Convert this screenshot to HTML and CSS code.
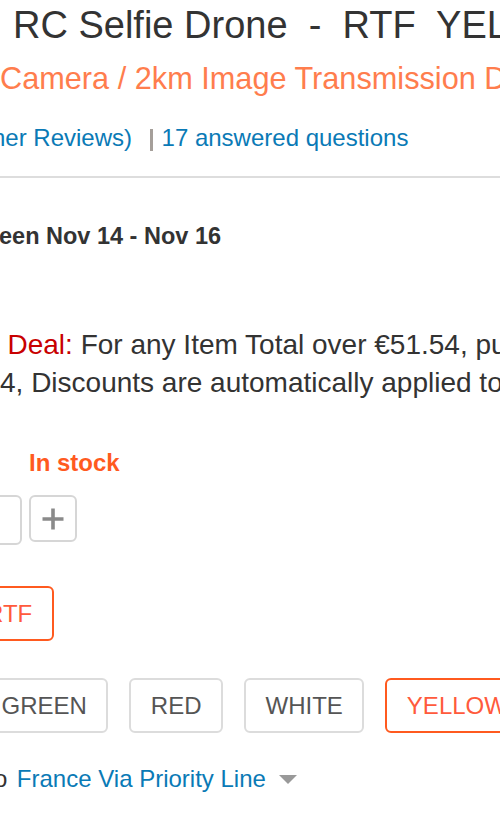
FILE: index.html
```html
<!DOCTYPE html>
<html>
<head>
<meta charset="utf-8">
<link rel="stylesheet" href="styles.css">
</head>
<body>
<div class="page">
  <h1 class="title">RC Selfie Drone&nbsp; -&nbsp; RTF&nbsp; YELLOW</h1>
  <h2 class="subtitle">Camera / 2km Image Transmission Drone</h2>
  <div class="reviews"><a class="link link-first">ner Reviews)</a><span class="sep"></span><a class="link">17 answered questions</a></div>
  <hr class="rule">
  <div class="delivery">een Nov 14 - Nov 16</div>
  <div class="deal">
    <p class="deal-line"><span class="deal-label">Deal:</span> For any Item Total over €51.54, purchase</p>
    <p class="deal-line">4, Discounts are automatically applied to</p>
  </div>
  <div class="stock">In stock</div>
  <div class="qty">
    <div class="qty-input"></div>
    <div class="qty-btn"><svg class="plus" width="22" height="22" viewBox="0 0 22 22"><path d="M11 0.5v21M0.5 11h21" stroke="#8a8a8a" stroke-width="3.6"/></svg></div>
  </div>
  <div class="opts">
    <div class="opt opt-sel opt-rtf">RTF</div>
  </div>
  <div class="opts colors">
    <div class="opt opt-green">GREEN</div>
    <div class="opt">RED</div>
    <div class="opt">WHITE</div>
    <div class="opt opt-sel">YELLOW</div>
  </div>
  <div class="ship"><span class="ship-to">o</span><a class="link">France Via Priority Line</a><span class="caret"></span></div>
</div>
</body>
</html>
```
FILE: styles.css
```css
html, body {
  margin: 0;
  padding: 0;
  background: #fff;
  overflow: hidden;
}
.page {
  width: 500px;
  height: 818px;
  overflow: hidden;
  font-family: "Liberation Sans", Arial, sans-serif;
  color: #333;
}
.title {
  margin: 0;
  padding: 3px 0 0 13px;
  font-size: 38px;
  font-weight: normal;
  line-height: 44px;
  white-space: nowrap;
  color: #333;
}
.subtitle {
  margin: 11.5px 0 0 0;
  font-size: 30.7px;
  font-weight: normal;
  line-height: 40px;
  white-space: nowrap;
  color: #ff7d4d;
}
.reviews {
  margin-top: 24.5px;
  font-size: 24px;
  line-height: 30px;
  height: 30px;
  white-space: nowrap;
  display: flex;
  align-items: flex-start;
}
.link {
  color: #0a7ab6;
  text-decoration: none;
}
.link-first {
  margin-left: -8px;
}
.sep {
  display: block;
  width: 2.5px;
  height: 22px;
  background: #a59f9a;
  margin: 6px 9px 0 18px;
}
.rule {
  margin: 23px 0 0 0;
  border: 0;
  height: 2px;
  background: #ddd;
}
.delivery {
  margin-top: 44px;
  font-size: 23.5px;
  font-weight: bold;
  line-height: 28px;
  white-space: nowrap;
  color: #333;
  margin-left: -1px;
}
.deal {
  margin-top: 76px;
  font-size: 28px;
  line-height: 38px;
  white-space: nowrap;
}
.deal-line {
  margin: 0;
}
.deal-line:first-child {
  padding-left: 7.5px;
}
.deal-label {
  color: #c80000;
}
.stock {
  margin-top: 47px;
  padding-left: 29px;
  font-size: 24px;
  font-weight: bold;
  color: #ff5a1f;
  line-height: 28px;
}
.qty {
  margin-top: 18px;
  display: flex;
  gap: 7px;
  align-items: flex-start;
}
.qty-input {
  width: 38px;
  height: 46px;
  margin-left: -20px;
  border: 2px solid #d6d6d6;
  border-radius: 6px;
}
.qty-btn {
  width: 44px;
  height: 43px;
  border: 2px solid #d6d6d6;
  border-radius: 6px;
  display: flex;
  align-items: center;
  justify-content: center;
}
.opts {
  display: flex;
  gap: 21px;
  margin-top: 41px;
}
.colors {
  margin-top: 37px;
}
.opt {
  height: 51px;
  padding: 0 19.5px;
  border: 2px solid #dcdcdc;
  border-radius: 6px;
  display: flex;
  align-items: center;
  font-size: 24px;
  color: #555;
  white-space: nowrap;
}
.opt-sel {
  border-color: #ff5a1f;
  color: #ff5a3c;
}
.opt-rtf {
  margin-left: -36px;
  padding: 0 20px;
}
.opt-green {
  margin-left: -20px;
}
.ship {
  margin-top: 31px;
  font-size: 24px;
  line-height: 30px;
  white-space: nowrap;
  display: flex;
  align-items: center;
}
.ship-to {
  margin-left: -6px;
  margin-right: 9.5px;
}
.caret {
  display: block;
  width: 0;
  height: 0;
  border-left: 9px solid transparent;
  border-right: 9px solid transparent;
  border-top: 9px solid #999;
  margin-left: 13px;
}
```
